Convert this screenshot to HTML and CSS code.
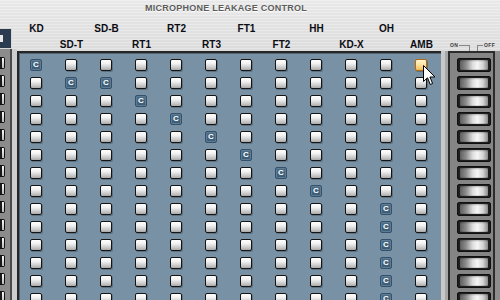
FILE: index.html
```html
<!DOCTYPE html>
<html>
<head>
<meta charset="utf-8">
<link rel="stylesheet" href="styles.css">
</head>
<body>
<div class="app">
  <div class="title">MICROPHONE LEAKAGE CONTROL</div>
  <div class="main">
    <div class="left">
      <div class="lhead"><div class="dbox"><span class="dmark"></span></div></div>
      <div class="lstrip">
        <div class="lgray">
          <i class="mb"></i><i class="mb"></i><i class="mb"></i><i class="mb"></i><i class="mb"></i><i class="mb"></i><i class="mb"></i>
          <i class="mb"></i><i class="mb"></i><i class="mb"></i><i class="mb"></i><i class="mb"></i><i class="mb"></i><i class="mb"></i>
        </div>
        <div class="ldark"></div>
        <div class="llight"></div>
      </div>
    </div>
    <div class="center">
      <div class="heads">
        <div class="hc top">KD</div>
        <div class="hc bot">SD-T</div>
        <div class="hc top">SD-B</div>
        <div class="hc bot">RT1</div>
        <div class="hc top">RT2</div>
        <div class="hc bot">RT3</div>
        <div class="hc top">FT1</div>
        <div class="hc bot">FT2</div>
        <div class="hc top">HH</div>
        <div class="hc bot">KD-X</div>
        <div class="hc top">OH</div>
        <div class="hc bot">AMB</div>
      </div>
      <div class="panel">
        <div class="grid">
          <i class="b c">C</i><i class="b"></i><i class="b"></i><i class="b"></i><i class="b"></i><i class="b"></i><i class="b"></i><i class="b"></i><i class="b"></i><i class="b"></i><i class="b"></i><i class="b h"></i>
          <i class="b"></i><i class="b c">C</i><i class="b c">C</i><i class="b"></i><i class="b"></i><i class="b"></i><i class="b"></i><i class="b"></i><i class="b"></i><i class="b"></i><i class="b"></i><i class="b"></i>
          <i class="b"></i><i class="b"></i><i class="b"></i><i class="b c">C</i><i class="b"></i><i class="b"></i><i class="b"></i><i class="b"></i><i class="b"></i><i class="b"></i><i class="b"></i><i class="b"></i>
          <i class="b"></i><i class="b"></i><i class="b"></i><i class="b"></i><i class="b c">C</i><i class="b"></i><i class="b"></i><i class="b"></i><i class="b"></i><i class="b"></i><i class="b"></i><i class="b"></i>
          <i class="b"></i><i class="b"></i><i class="b"></i><i class="b"></i><i class="b"></i><i class="b c">C</i><i class="b"></i><i class="b"></i><i class="b"></i><i class="b"></i><i class="b"></i><i class="b"></i>
          <i class="b"></i><i class="b"></i><i class="b"></i><i class="b"></i><i class="b"></i><i class="b"></i><i class="b c">C</i><i class="b"></i><i class="b"></i><i class="b"></i><i class="b"></i><i class="b"></i>
          <i class="b"></i><i class="b"></i><i class="b"></i><i class="b"></i><i class="b"></i><i class="b"></i><i class="b"></i><i class="b c">C</i><i class="b"></i><i class="b"></i><i class="b"></i><i class="b"></i>
          <i class="b"></i><i class="b"></i><i class="b"></i><i class="b"></i><i class="b"></i><i class="b"></i><i class="b"></i><i class="b"></i><i class="b c">C</i><i class="b"></i><i class="b"></i><i class="b"></i>
          <i class="b"></i><i class="b"></i><i class="b"></i><i class="b"></i><i class="b"></i><i class="b"></i><i class="b"></i><i class="b"></i><i class="b"></i><i class="b"></i><i class="b c">C</i><i class="b"></i>
          <i class="b"></i><i class="b"></i><i class="b"></i><i class="b"></i><i class="b"></i><i class="b"></i><i class="b"></i><i class="b"></i><i class="b"></i><i class="b"></i><i class="b c">C</i><i class="b"></i>
          <i class="b"></i><i class="b"></i><i class="b"></i><i class="b"></i><i class="b"></i><i class="b"></i><i class="b"></i><i class="b"></i><i class="b"></i><i class="b"></i><i class="b c">C</i><i class="b"></i>
          <i class="b"></i><i class="b"></i><i class="b"></i><i class="b"></i><i class="b"></i><i class="b"></i><i class="b"></i><i class="b"></i><i class="b"></i><i class="b"></i><i class="b c">C</i><i class="b"></i>
          <i class="b"></i><i class="b"></i><i class="b"></i><i class="b"></i><i class="b"></i><i class="b"></i><i class="b"></i><i class="b"></i><i class="b"></i><i class="b"></i><i class="b c">C</i><i class="b"></i>
          <i class="b"></i><i class="b"></i><i class="b"></i><i class="b"></i><i class="b"></i><i class="b"></i><i class="b"></i><i class="b"></i><i class="b"></i><i class="b"></i><i class="b c">C</i><i class="b"></i>
        </div>
        <svg class="cursor" width="13" height="21" viewBox="0 0 13 21">
          <path d="M0.5 0.5 L0.5 16.5 L4.5 12.8 L7.3 19.5 L9.6 18.5 L6.9 12 L12 12 Z" fill="#fff" stroke="#000" stroke-width="1" stroke-linejoin="miter"/>
        </svg>
      </div>
    </div>
    <div class="right">
      <div class="onoff">
        <span class="ot">ON</span>
        <span class="ln1"></span>
        <span class="ln2"></span>
        <span class="ot">OFF</span>
      </div>
      <div class="rbody">
        <div class="rlight"></div>
        <div class="swpanel">
          <i class="sw"></i><i class="sw"></i><i class="sw"></i><i class="sw"></i><i class="sw"></i><i class="sw"></i><i class="sw"></i>
          <i class="sw"></i><i class="sw"></i><i class="sw"></i><i class="sw"></i><i class="sw"></i><i class="sw"></i><i class="sw"></i>
        </div>
      </div>
    </div>
  </div>
</div>
</body>
</html>
```

FILE: styles.css
```css
* { box-sizing: border-box; }

html, body {
  margin: 0;
  padding: 0;
}

body {
  width: 500px;
  height: 300px;
  overflow: hidden;
  font-family: "Liberation Sans", Arial, sans-serif;
  background:
    repeating-linear-gradient(180deg, rgba(255,255,255,0.18) 0, rgba(255,255,255,0.18) 1px, rgba(0,0,0,0.02) 1px, rgba(0,0,0,0.02) 3px),
    linear-gradient(180deg, #ededed 0, #e0e0e0 50px, #d8d8d8 100%);
}

.app {
  display: flex;
  flex-direction: column;
  height: 300px;
}

.title {
  height: 20px;
  padding: 3px 48px 0 0;
  text-align: center;
  font-size: 9px;
  line-height: 10px;
  font-weight: bold;
  letter-spacing: 0.25px;
  color: #5c5c5c;
  text-shadow: 0 1px 0 #ffffff;
}

.main {
  display: flex;
  flex: 1;
  min-height: 0;
}

/* ---------- left strip ---------- */
.left {
  width: 17px;
  display: flex;
  flex-direction: column;
}

.lhead {
  height: 31px;
  padding-top: 8px;
}

.dbox {
  width: 12px;
  height: 21px;
  background: #2b3c50;
  border: 1px solid #d8d8d8;
  border-left: 0;
  padding-top: 6px;
}

.dmark {
  display: block;
  width: 3px;
  height: 7px;
  background: #e8e8e8;
}

.lstrip {
  flex: 1;
  display: flex;
}

.lgray {
  width: 10px;
  background: #8c8c8c;
  padding-top: 8px;
  display: flex;
  flex-direction: column;
  gap: 6px;
}

.mb {
  display: block;
  width: 5px;
  height: 12px;
  flex: none;
  border: 1px solid #111;
  border-left: 0;
  border-radius: 0 2px 2px 0;
  background: linear-gradient(180deg, #ffffff, #b8b8b8);
  box-shadow: inset 3px 0 0 -1px #1a1a1a;
}

.ldark {
  width: 2px;
  background: #4a4a4a;
}

.llight {
  width: 5px;
  background: #cecece;
}

/* ---------- center ---------- */
.center {
  width: 424px;
  display: flex;
  flex-direction: column;
}

.heads {
  height: 31px;
  display: flex;
  padding: 3px 0 0 2px;
}

.hc {
  width: 35px;
  height: 28px;
  display: flex;
  flex-direction: column;
  text-align: center;
  font-size: 10px;
  line-height: 12px;
  font-weight: bold;
  color: #0c0c14;
}

.hc.top { justify-content: flex-start; }
.hc.bot { justify-content: flex-end; }

.panel {
  position: relative;
  flex: 1;
  background: #7891a4;
  border-top: 2px solid #262626;
  border-left: 2px solid #262626;
  padding: 6px 2px 0 0;
  box-shadow: inset 1px 1px 0 #4f6474;
}

.grid {
  display: grid;
  grid-template-columns: repeat(12, 35px);
  grid-auto-rows: 12px;
  row-gap: 6px;
}

.b {
  display: block;
  width: 12px;
  height: 12px;
  margin-left: 11px;
  border: 1px solid #151515;
  border-radius: 2px;
  background: linear-gradient(180deg, #ffffff 0%, #f2f2f2 35%, #c4c4c4 80%, #a8a8a8 100%);
  box-shadow: 1px 1px 0 rgba(40,55,70,0.35);
}

.b.c {
  border-color: #34506a;
  background: linear-gradient(180deg, #4e6d86, #3b5a73);
  box-shadow: inset 0 0 0 1px #5d7c94;
  color: #ffffff;
  font-style: normal;
  font-size: 8px;
  line-height: 10px;
  font-weight: bold;
  text-align: center;
}

.b.h {
  border-color: #b06a10;
  background: linear-gradient(180deg, #fff4d0 0%, #ffe3a0 45%, #f2bd5a 100%);
}

.cursor {
  position: absolute;
  left: 404px;
  top: 12px;
}

/* ---------- right ---------- */
.right {
  flex: 1;
  display: flex;
  flex-direction: column;
}

.onoff {
  height: 31px;
  display: flex;
  align-items: flex-start;
  padding: 23px 0 0 9px;
  font-size: 5px;
  line-height: 5px;
  font-weight: bold;
  color: #3a3a3a;
}

.ot {
  letter-spacing: 0.3px;
}

.ln1 {
  width: 11px;
  height: 8px;
  margin: 2px 0 0 1px;
  border-top: 1px solid #888;
  border-right: 1px solid #888;
}

.ln2 {
  width: 6px;
  height: 8px;
  margin: 2px 1px 0 7px;
  border-top: 1px solid #888;
  border-left: 1px solid #888;
}

.rbody {
  flex: 1;
  display: flex;
  background: #8e8e8e;
}

.rlight {
  width: 7px;
  background: linear-gradient(90deg, #c8c8c8 0, #c8c8c8 4px, #a6a6a6 4px);
}

.swpanel {
  width: 47px;
  background: #858585;
  border: 2px solid #2c2c2c;
  border-bottom: 0;
  padding: 5px 2px 0 7px;
  display: flex;
  flex-direction: column;
  gap: 4px;
}

.sw {
  display: block;
  flex: none;
  width: 34px;
  height: 14px;
  border: 1px solid #101010;
  border-radius: 2px;
  padding: 1px 2px;
  background: #1e1e1e;
}

.sw::before {
  content: "";
  display: block;
  height: 100%;
  border-radius: 1px;
  background:
    linear-gradient(180deg, rgba(0,0,0,0.25) 0, rgba(0,0,0,0) 2px, rgba(0,0,0,0) 9px, rgba(0,0,0,0.25) 100%),
    linear-gradient(90deg, #5e5e5e 0%, #8e8e8e 22%, #dcdcdc 45%, #f6f6f6 62%, #d4d4d4 82%, #8a8a8a 100%);
}
```
